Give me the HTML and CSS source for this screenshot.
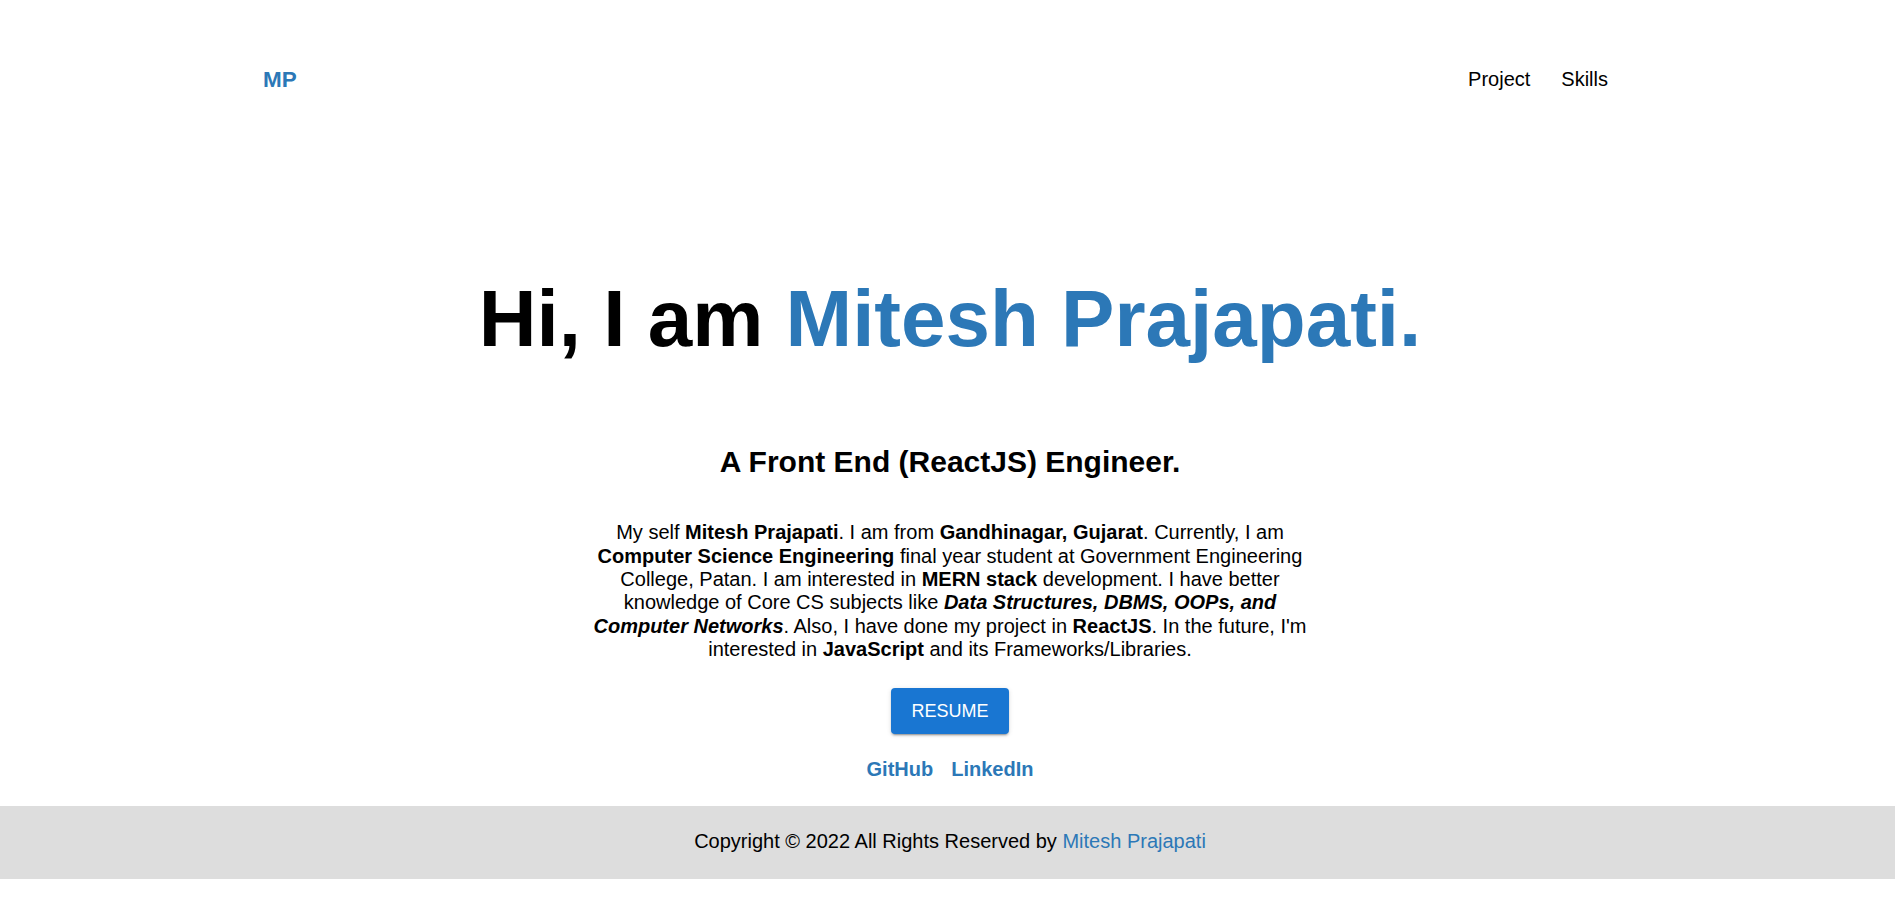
FILE: index.html
```html
<!DOCTYPE html>
<html lang="en">
<head>
<meta charset="utf-8">
<title>Mitesh Prajapati</title>
<link rel="stylesheet" href="styles.css">
</head>
<body>
<header class="topbar">
  <a class="brand" href="#">MP</a>
  <nav class="nav">
    <a href="#project">Project</a>
    <a href="#skills">Skills</a>
  </nav>
</header>
<main class="hero">
  <h1 class="title">Hi, I am <span class="accent">Mitesh Prajapati.</span></h1>
  <h3 class="subtitle">A Front End (ReactJS) Engineer.</h3>
  <p class="about">My self <b>Mitesh Prajapati</b>. I am from <b>Gandhinagar, Gujarat</b>. Currently, I am <b>Computer Science Engineering</b> final year student at Government Engineering College, Patan. I am interested in <b>MERN stack</b> development. I have better knowledge of Core CS subjects like <b><i>Data Structures, DBMS, OOPs, and Computer Networks</i></b>. Also, I have done my project in <b>ReactJS</b>. In the future, I'm interested in <b>JavaScript</b> and its Frameworks/Libraries.</p>
  <button class="resume" type="button">RESUME</button>
  <div class="links">
    <a href="#">GitHub</a>
    <a href="#">LinkedIn</a>
  </div>
</main>
<footer class="footer">
  Copyright © 2022 All Rights Reserved by <a href="#">Mitesh Prajapati</a>
</footer>
</body>
</html>
```

FILE: styles.css
```css
* { box-sizing: border-box; }
html, body { margin: 0; padding: 0; }
body {
  font-family: "Liberation Sans", Arial, sans-serif;
  color: #000;
  background: #fff;
}
a { text-decoration: none; }

.topbar {
  display: flex;
  align-items: center;
  justify-content: space-between;
  padding: 66px 287px 0 263px;
}
.brand {
  font-size: 22.5px;
  line-height: 27.6px;
  font-weight: bold;
  color: #2c78b7;
}
.nav {
  display: flex;
  gap: 31px;
}
.nav a {
  font-size: 20px;
  color: #000;
}

.hero {
  display: flex;
  flex-direction: column;
  align-items: center;
  text-align: center;
  padding-left: 5px;
}
.title {
  margin: 179px 0 0;
  font-size: 80px;
  line-height: 92px;
  font-weight: bold;
}
.accent { color: #2c78b7; }
.subtitle {
  margin: 80px 0 0;
  font-size: 30px;
  line-height: 34.5px;
  font-weight: bold;
}
.about {
  margin: 42px 0 0;
  max-width: 730px;
  font-size: 20px;
  line-height: 23.4px;
}
.resume {
  margin-top: 26px;
  background: #1976d2;
  color: #fff;
  border: 0;
  border-radius: 4px;
  font-family: "Liberation Sans", Arial, sans-serif;
  font-size: 18px;
  line-height: 26px;
  padding: 10px 20px;
  box-shadow: 0 3px 1px -2px rgba(0,0,0,0.2), 0 2px 2px 0 rgba(0,0,0,0.14), 0 1px 5px 0 rgba(0,0,0,0.12);
  cursor: pointer;
}
.links {
  margin-top: 24px;
  display: flex;
  gap: 18px;
}
.links a {
  font-size: 20px;
  line-height: 23px;
  font-weight: bold;
  color: #2c78b7;
}

.footer {
  margin-top: 25px;
  background: #dddddd;
  padding: 24px 0 26px 5px;
  text-align: center;
  font-size: 20px;
  line-height: 23px;
  color: #000;
}
.footer a { color: #2c78b7; }
```
